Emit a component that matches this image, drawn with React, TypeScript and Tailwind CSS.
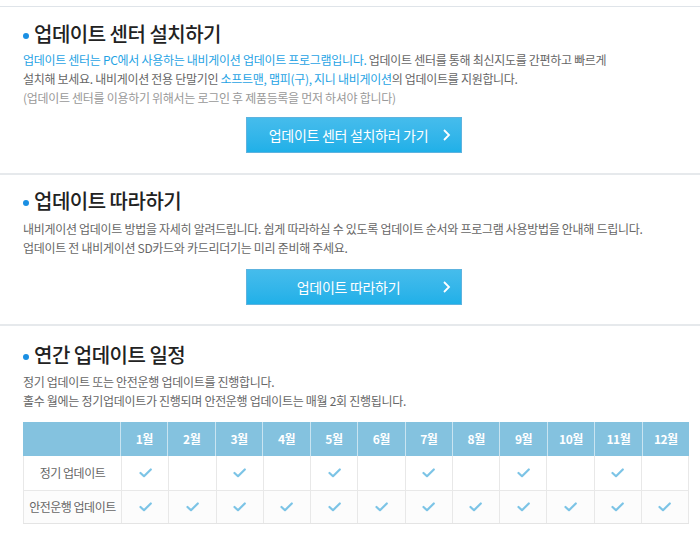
import React from 'react';

const months = ['1월', '2월', '3월', '4월', '5월', '6월', '7월', '8월', '9월', '10월', '11월', '12월'];
const regular = [true, false, true, false, true, false, true, false, true, false, true, false];
const safety = months.map(() => true);

const Check = () => (
  <svg width="13" height="10" viewBox="0 0 13 10" fill="none">
    <path d="M1.5 5 L5 8.2 L11.8 1.5" stroke="#7cc4e6" strokeWidth="2.2" strokeLinecap="round" strokeLinejoin="round" />
  </svg>
);

const Heading = ({ children }: { children: React.ReactNode }) => (
  <h2 className="flex items-center h-[28px] text-[20px] font-medium text-[#222] tracking-[-0.5px]">
    <span className="w-[6px] h-[6px] rounded-full bg-[#1a8fe3] mr-[5px] mt-[3px]"></span>
    {children}
  </h2>
);

const GoButton = ({ label, className }: { label: string; className: string }) => (
  <div className={`flex justify-center pl-[8px] ${className}`}>
    <button className="flex items-center w-[216px] h-[36px] bg-gradient-to-b from-[#45bcec] to-[#1fb0e8] border border-[#5db3df] text-white text-[14px] tracking-[-0.3px]">
      <span className="flex-1 text-center pl-[8px]">{label}</span>
      <svg width="9" height="14" viewBox="0 0 9 14" className="mr-[10px]">
        <path d="M2 2 L7 7 L2 12" stroke="#fff" strokeWidth="1.8" fill="none" />
      </svg>
    </button>
  </div>
);

const App = () => {
  return (
    <div className="w-[700px] h-[538px] bg-white overflow-hidden font-['Noto_Sans_CJK_KR','Noto_Sans',sans-serif]">
      <div className="mt-[6px] border-t border-[#dfe4e9]"></div>

      {/* 업데이트 센터 설치 */}
      <section className="px-[23px] pt-[13px] pb-[20px]">
        <Heading>업데이트 센터 설치하기</Heading>
        <p className="mt-[2px] text-[12px] leading-[19px] text-[#666] tracking-[-0.3px]">
          <span className="text-[#1fa3e4]">업데이트 센터는 PC에서 사용하는 내비게이션 업데이트 프로그램입니다.</span> 업데이트 센터를 통해 최신지도를 간편하고 빠르게
          <br />
          설치해 보세요. 내비게이션 전용 단말기인 <span className="text-[#1fa3e4]">소프트맨, 맵피(구), 지니 내비게이션</span>의 업데이트를 지원합니다.
          <br />
          <span className="text-[#999]">(업데이트 센터를 이용하기 위해서는 로그인 후 제품등록을 먼저 하셔야 합니다)</span>
        </p>
        <GoButton label="업데이트 센터 설치하러 가기" className="mt-[10px]" />
      </section>

      <div className="border-t-2 border-[#e6e9ec]"></div>

      {/* 업데이트 따라하기 */}
      <section className="px-[23px] pt-[12px] pb-[19px]">
        <Heading>업데이트 따라하기</Heading>
        <p className="mt-[4px] text-[12px] leading-[19px] text-[#666] tracking-[-0.3px]">
          내비게이션 업데이트 방법을 자세히 알려드립니다. 쉽게 따라하실 수 있도록 업데이트 순서와 프로그램 사용방법을 안내해 드립니다.
          <br />
          업데이트 전 내비게이션 SD카드와 카드리더기는 미리 준비해 주세요.
        </p>
        <GoButton label="업데이트 따라하기" className="mt-[12px]" />
      </section>

      <div className="border-t-2 border-[#e6e9ec]"></div>

      {/* 연간 업데이트 일정 */}
      <section className="px-[23px] pt-[15px]">
        <Heading>연간 업데이트 일정</Heading>
        <p className="mt-[3px] text-[12px] leading-[19px] text-[#666] tracking-[-0.3px]">
          정기 업데이트 또는 안전운행 업데이트를 진행합니다.
          <br />
          홀수 월에는 정기업데이트가 진행되며 안전운행 업데이트는 매월 2회 진행됩니다.
        </p>

        <div className="mt-[12px] w-[666px] border-b border-[#e4e4e4]">
          <div className="grid grid-cols-[97px_repeat(12,1fr)] h-[34px] bg-[#84c2df] text-white text-[12px] font-bold">
            <div></div>
            {months.map(m => (
              <div key={m} className="flex items-center justify-center border-l border-[#c9e4f1] tracking-[-0.5px]">
                {m}
              </div>
            ))}
          </div>
          <div className="grid grid-cols-[97px_repeat(12,1fr)] h-[34px] bg-white text-[12px] text-[#666] border-l border-r border-[#e8e8e8]">
            <div className="flex items-center justify-center tracking-[-0.5px]">정기 업데이트</div>
            {regular.map((v, i) => (
              <div key={i} className="flex items-center justify-center border-l border-[#e8e8e8]">
                {v && <Check />}
              </div>
            ))}
          </div>
          <div className="grid grid-cols-[97px_repeat(12,1fr)] h-[33px] bg-[#fcfcfc] text-[12px] text-[#666] border-t border-l border-r border-[#e8e8e8]">
            <div className="flex items-center justify-center tracking-[-0.5px]">안전운행 업데이트</div>
            {safety.map((v, i) => (
              <div key={i} className="flex items-center justify-center border-l border-[#e8e8e8]">
                {v && <Check />}
              </div>
            ))}
          </div>
        </div>
      </section>
    </div>
  );
};

export default App;
